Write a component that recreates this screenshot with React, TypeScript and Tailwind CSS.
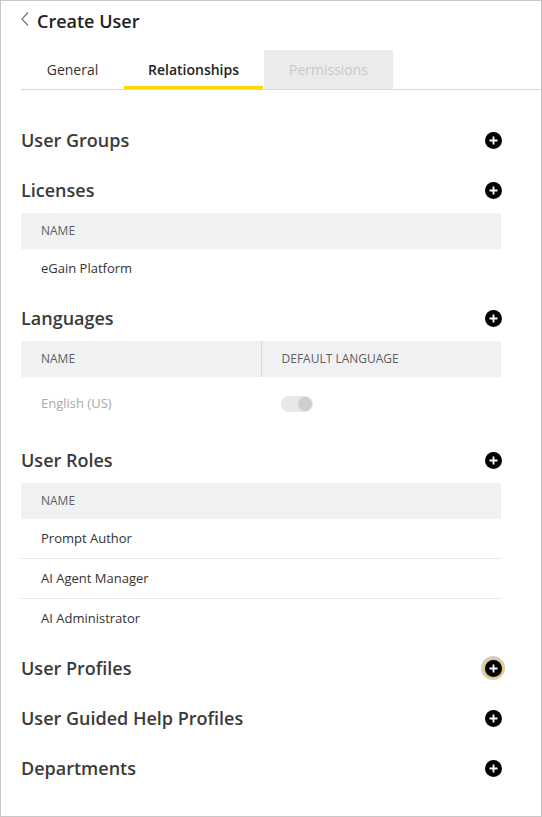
import React from "react";

const font = { fontFamily: '"Open Sans", "Liberation Sans", sans-serif' };

function PlusButton({ focused = false }: { focused?: boolean }) {
  return (
    <button
      type="button"
      className={`flex h-[24px] w-[24px] items-center justify-center rounded-full ${focused ? "bg-[#cfcfcf]" : ""}`}
    >
      <span
        className={`flex h-[17px] w-[17px] items-center justify-center rounded-full bg-black ${focused ? "ring-1 ring-[#f5c400]" : ""}`}
      >
        <svg width="11" height="11" viewBox="0 0 11 11">
          <path d="M5.5 1.5v8M1.5 5.5h8" stroke="#fff" strokeWidth="1.8" />
        </svg>
      </span>
    </button>
  );
}

function Section({
  title,
  focused,
  children,
}: {
  title: string;
  focused?: boolean;
  children?: React.ReactNode;
}) {
  return (
    <section className="pb-[4px]">
      <div className="flex h-[46px] items-center justify-between">
        <h2 className="text-[18px] font-semibold text-[#3a3a3a]">{title}</h2>
        <div className="mr-[-4px]">
          <PlusButton focused={focused} />
        </div>
      </div>
      {children && <div className="pb-[2px]">{children}</div>}
    </section>
  );
}

function HeaderCell({ label, divider }: { label: string; divider?: boolean }) {
  return (
    <div
      className={`flex h-[36px] flex-1 items-center px-5 text-[12px] uppercase text-[#5f5f5f] ${divider ? "border-l border-[#d9d9d9]" : ""}`}
    >
      {label}
    </div>
  );
}

function SimpleTable({ rows }: { rows: string[] }) {
  return (
    <div>
      <div className="flex bg-[#f0f1f3]">
        <HeaderCell label="Name" />
      </div>
      {rows.map((r, i) => (
        <div
          key={r}
          className={`flex h-[40px] items-center px-5 text-[13px] text-[#333] ${i < rows.length - 1 ? "border-b border-[#e6e6e6]" : ""}`}
        >
          {r}
        </div>
      ))}
    </div>
  );
}

export default function App() {
  return (
    <div
      className="h-[817px] w-[542px] border border-[#c8c8c8] bg-white"
      style={font}
    >
      <div className="flex h-[40px] items-center pl-[19px]">
        <svg width="10" height="16" viewBox="0 0 10 16" className="mb-[4px]">
          <path d="M8 1.5L2 8l6 6.5" fill="none" stroke="#777" strokeWidth="1.2" />
        </svg>
        <h1 className="ml-[7px] text-[18px] font-semibold text-[#222]">Create User</h1>
      </div>

      <div className="ml-[20px] mt-[9px] flex h-[40px] border-b border-[#d6d6d6]">
        <div className="flex w-[103px] items-center justify-center text-[14px] text-[#333]">
          General
        </div>
        <div className="flex w-[139px] items-center justify-center border-b-[3px] border-[#ffd500] pt-[3px] text-[14px] font-semibold text-[#222]">
          Relationships
        </div>
        <div className="ml-px flex w-[129px] items-center justify-center bg-[#ebebeb] text-[14px] text-[#c8c8c8]">
          Permissions
        </div>
      </div>

      <div className="pl-[20px] pr-[40px] pt-[27px]">
        <Section title="User Groups" />
        <Section title="Licenses">
          <SimpleTable rows={["eGain Platform"]} />
        </Section>
        <Section title="Languages">
          <div>
            <div className="flex bg-[#f0f1f3]">
              <HeaderCell label="Name" />
              <HeaderCell label="Default Language" divider />
            </div>
            <div className="flex h-[54px] items-center">
              <div className="flex-1 px-5 text-[13px] text-[#aaa]">English (US)</div>
              <div className="flex-1 px-5">
                <div className="flex h-[16px] w-[32px] items-center justify-end rounded-full bg-[#e8e8e8] pr-[1px]">
                  <div className="h-[14px] w-[14px] rounded-full bg-[#cfcfcf]" />
                </div>
              </div>
            </div>
          </div>
        </Section>
        <Section title="User Roles">
          <SimpleTable rows={["Prompt Author", "AI Agent Manager", "AI Administrator"]} />
        </Section>
        <Section title="User Profiles" focused />
        <Section title="User Guided Help Profiles" />
        <Section title="Departments" />
      </div>
    </div>
  );
}
